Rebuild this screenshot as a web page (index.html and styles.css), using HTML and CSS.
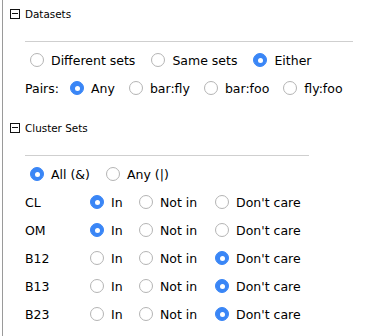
FILE: index.html
```html
<!DOCTYPE html>
<html>
  <head>
    <title>Filters</title>
    <link rel="stylesheet" href="styles.css">
  </head>
  <body>
    <div class="panel">
      <div class="section">
        <div class="section-head"><span class="toggle"></span>Datasets</div>
        <div class="rule rule-wide"></div>
        <div class="opt-row opt-row-sets">
          <label class="opt"><span class="radio"></span>Different sets</label>
          <label class="opt"><span class="radio"></span>Same sets</label>
          <label class="opt"><span class="radio checked"></span>Either</label>
        </div>
        <div class="opt-row opt-row-pairs">
          <span class="row-label">Pairs:</span>
          <label class="opt"><span class="radio checked"></span>Any</label>
          <label class="opt"><span class="radio"></span>bar:fly</label>
          <label class="opt"><span class="radio"></span>bar:foo</label>
          <label class="opt"><span class="radio"></span>fly:foo</label>
        </div>
      </div>

      <div class="section section-clusters">
        <div class="section-head"><span class="toggle"></span>Cluster Sets</div>
        <div class="rule rule-narrow"></div>
        <div class="opt-row opt-row-sets">
          <label class="opt"><span class="radio checked"></span>All (&amp;)</label>
          <label class="opt"><span class="radio"></span>Any (|)</label>
        </div>
        <div class="cluster-grid">
          <!-- CL -->
          <span class="set-name">CL</span>
          <label class="opt"><span class="radio checked"></span>In</label>
          <label class="opt"><span class="radio"></span>Not in</label>
          <label class="opt"><span class="radio"></span>Don't care</label>
          <!-- OM -->
          <span class="set-name">OM</span>
          <label class="opt"><span class="radio checked"></span>In</label>
          <label class="opt"><span class="radio"></span>Not in</label>
          <label class="opt"><span class="radio"></span>Don't care</label>
          <!-- B12 -->
          <span class="set-name">B12</span>
          <label class="opt"><span class="radio"></span>In</label>
          <label class="opt"><span class="radio"></span>Not in</label>
          <label class="opt"><span class="radio checked"></span>Don't care</label>
          <!-- B13 -->
          <span class="set-name">B13</span>
          <label class="opt"><span class="radio"></span>In</label>
          <label class="opt"><span class="radio"></span>Not in</label>
          <label class="opt"><span class="radio checked"></span>Don't care</label>
          <!-- B23 -->
          <span class="set-name">B23</span>
          <label class="opt"><span class="radio"></span>In</label>
          <label class="opt"><span class="radio"></span>Not in</label>
          <label class="opt"><span class="radio checked"></span>Don't care</label>
        </div>
      </div>
    </div>
  </body>
</html>
```

FILE: styles.css
```css
body {
  margin: 0;
  font-family: "DejaVu Sans", Verdana, sans-serif;
  font-size: 12.5px;
  color: #000;
  background-color: #fff;
}

.panel {
  margin-left: 2px;
  height: 336px;
  border-left: 1px solid #9a9a9a;
  box-sizing: border-box;
}

.section-head {
  display: flex;
  align-items: center;
  height: 27px;
  padding-left: 7px;
  font-size: 10.4px;
}

.section-clusters {
  margin-top: 12px;
}

.toggle {
  position: relative;
  width: 8px;
  height: 8px;
  border: 1px solid #111;
  margin-right: 5px;
}

.toggle::after {
  content: "";
  position: absolute;
  left: 1px;
  right: 1px;
  top: 3.5px;
  height: 1px;
  background-color: #111;
}

.rule {
  height: 1px;
  margin-top: 14px;
  margin-left: 22px;
  background-color: #cfcfcf;
}

.rule-wide {
  width: 328px;
}

.rule-narrow {
  width: 284px;
}

.opt-row {
  display: flex;
  align-items: center;
  height: 28px;
  padding-left: 27px;
}

.rule + .opt-row {
  margin-top: 4px;
}

.opt-row-sets .opt {
  margin-right: 16px;
}

.opt-row-pairs {
  padding-left: 22px;
}

.opt-row-pairs .row-label {
  width: 45px;
}

.opt-row-pairs .opt {
  margin-right: 14px;
}

.opt {
  display: inline-flex;
  align-items: center;
  white-space: nowrap;
}

.radio {
  position: relative;
  width: 12px;
  height: 12px;
  margin-right: 7px;
  border: 1px solid #b4b4b4;
  border-radius: 50%;
  background-color: #fff;
  flex-shrink: 0;
}

.radio.checked {
  border-color: #3a86f6;
  background-color: #3a86f6;
}

.radio.checked::after {
  content: "";
  position: absolute;
  left: 3.5px;
  top: 3.5px;
  width: 5px;
  height: 5px;
  border-radius: 50%;
  background-color: #fff;
}

.cluster-grid {
  display: grid;
  grid-template-columns: 65px 49px 76px auto;
  grid-auto-rows: 28px;
  align-items: center;
  padding-left: 22px;
}
```
